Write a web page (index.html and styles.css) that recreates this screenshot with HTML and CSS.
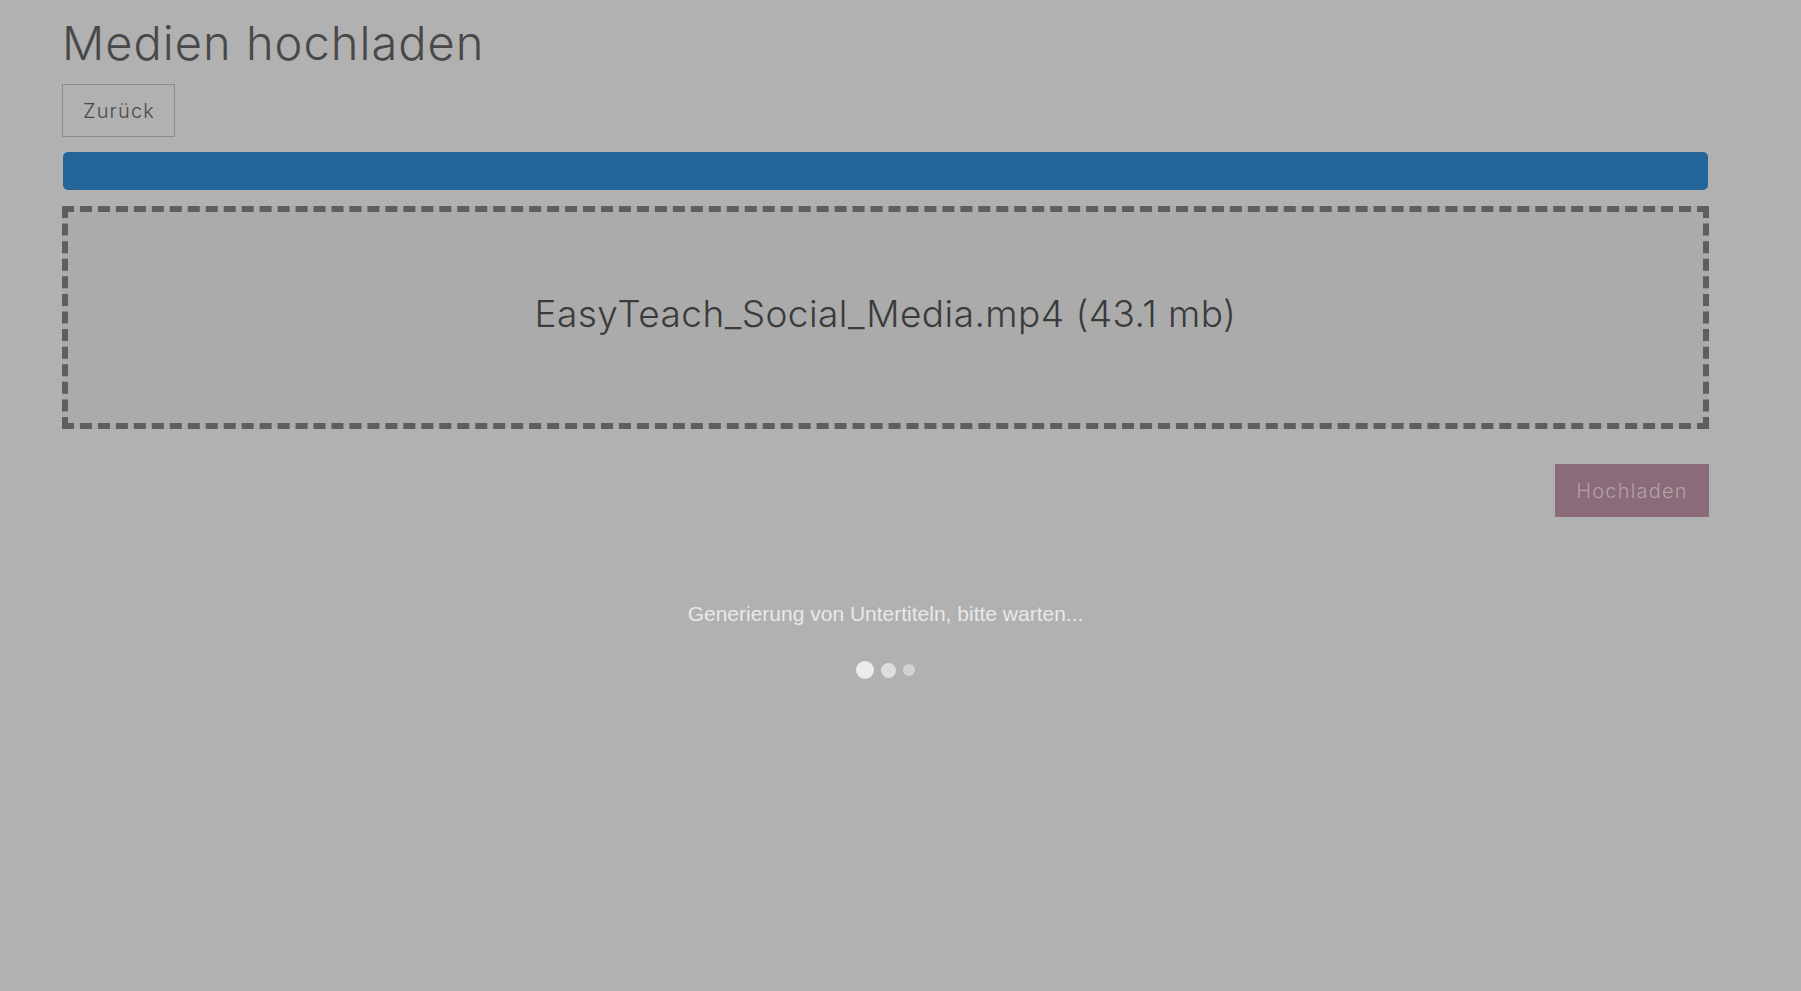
FILE: index.html
```html
<!DOCTYPE html>
<html lang="de">

<head>
  <meta charset="UTF-8" />
  <title>Medien hochladen</title>
  <link rel="stylesheet" href="styles.css">
</head>

<body>
  <div class="page">
    <h1 class="title">Medien hochladen</h1>
    <button class="btn-back">Zurück</button>

    <div class="progress">
      <div class="progress-bar"></div>
    </div>

    <div class="dropzone">
      <p class="file-name">EasyTeach_Social_Media.mp4 (43.1 mb)</p>
    </div>

    <div class="actions">
      <button class="btn-upload">Hochladen</button>
    </div>

    <div class="loading">
      <p class="loading-text">Generierung von Untertiteln, bitte warten...</p>
      <div class="dots">
        <span class="dot dot-1"></span>
        <span class="dot dot-2"></span>
        <span class="dot dot-3"></span>
      </div>
    </div>
  </div>
</body>

</html>
```

FILE: styles.css
```css
* {
  padding: 0;
  margin: 0;
  box-sizing: border-box;
}

body {
  background: #b1b1b1;
  font-family: Inter, "Open Sans", sans-serif;
  min-height: 991px;
}

.page {
  width: 1647px;
  margin-left: 62px;
  padding-top: 15px;
}

.title {
  font-size: 47px;
  line-height: 56px;
  font-weight: 300;
  letter-spacing: 1px;
  color: #484848;
}

.btn-back {
  margin-top: 13px;
  height: 53px;
  padding: 0 19px 0 20px;
  background: transparent;
  border: 1px solid #8c8c8c;
  font-family: inherit;
  font-size: 20px;
  font-weight: 300;
  letter-spacing: 1.2px;
  color: #4a4a4a;
  cursor: pointer;
}

.progress {
  margin: 15px 1px 0;
  height: 38px;
}

.progress-bar {
  width: 100%;
  height: 100%;
  background: #236598;
  border-radius: 5px;
}

.dropzone {
  margin-top: 16px;
  height: 223px;
  padding-bottom: 8px;
  border: 6px dashed #5e5e5e;
  background: #ababab;
  display: flex;
  align-items: center;
  justify-content: center;
}

.file-name {
  font-size: 37px;
  font-weight: 300;
  letter-spacing: 0.45px;
  color: #3b3b3b;
}

.actions {
  display: flex;
  justify-content: flex-end;
  margin-top: 35px;
}

.btn-upload {
  width: 154px;
  height: 53px;
  border: 0;
  background: #8b6b79;
  font-family: inherit;
  font-size: 20px;
  font-weight: 300;
  letter-spacing: 1.2px;
  color: #b0a1a8;
}

.loading {
  margin-top: 85px;
  display: flex;
  flex-direction: column;
  align-items: center;
}

.loading-text {
  font-family: "Liberation Sans", Arial, sans-serif;
  font-size: 21px;
  line-height: 24px;
  color: #e9e9e9;
}

.dots {
  margin-top: 35px;
  height: 18px;
  display: flex;
  align-items: center;
  gap: 7px;
}

.dot {
  border-radius: 50%;
}

.dot-1 {
  width: 18px;
  height: 18px;
  background: #ececec;
}

.dot-2 {
  width: 15px;
  height: 15px;
  background: #dedede;
}

.dot-3 {
  width: 12px;
  height: 12px;
  background: #d2d2d2;
}
```
